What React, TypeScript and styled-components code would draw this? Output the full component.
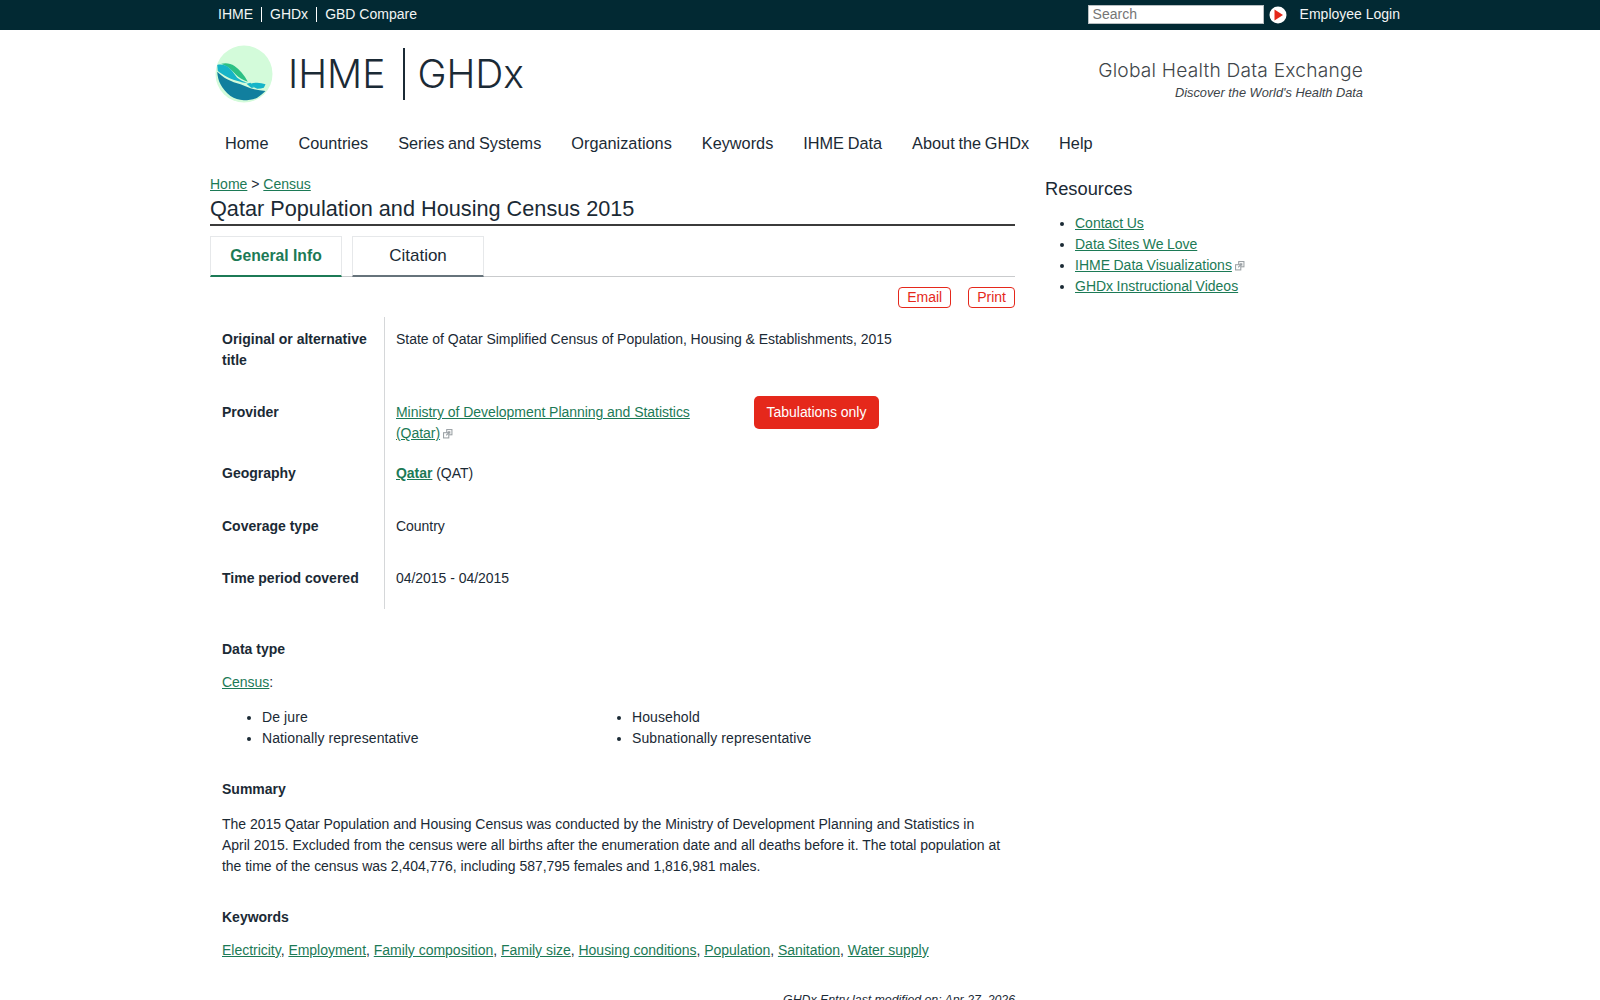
import React from 'react'
import styled, { createGlobalStyle } from 'styled-components'

const GlobalStyle = createGlobalStyle`
  html, body {
    margin: 0;
    padding: 0;
    background: #fff;
    color: #1b2a35;
    font-family: "Liberation Sans", Arial, sans-serif;
    font-size: 14px;
    line-height: 21px;
  }
  ul { margin: 0; padding: 0; }
`

const TopBar = styled.div`
  height: 30px;
  background-color: #022933;
  color: #fff;
`

const TopInner = styled.div`
  width: 1192px;
  height: 30px;
  margin: 0 0 0 208px;
  padding: 0 0 1px 10px;
  box-sizing: border-box;
  display: flex;
  align-items: center;
  justify-content: space-between;
`

const TopLinks = styled.div`
  display: flex;
  align-items: center;
`

const TopLink = styled.a<{ $first?: boolean }>`
  color: #f2f5f5;
  font-size: 14px;
  line-height: 15px;
  padding: 0 8px;
  padding-left: ${({ $first }) => ($first ? '0' : '8px')};
  border-left: ${({ $first }) => ($first ? 'none' : '1px solid #fff')};
`

const LoginLink = styled.a`
  color: #f2f5f5;
  font-size: 14px;
  line-height: 15px;
`

const SearchArea = styled.div`
  display: flex;
  align-items: center;
`

const SearchInput = styled.input`
  width: 176px;
  height: 19px;
  box-sizing: border-box;
  border: 1px solid #b9bfc2;
  padding: 0 4px 2px;
  font-family: inherit;
  font-size: 14px;
  color: #444;
  background: #fff;
  outline: none;

  ::placeholder {
    color: #757575;
  }
`

const SearchGo = styled.svg`
  width: 18px;
  height: 18px;
  margin: 0 13px 0 5px;
`

const HeaderRow = styled.div`
  width: 1155px;
  margin-left: 208px;
  padding-top: 14px;
  height: 79px;
  display: flex;
  justify-content: space-between;
  align-items: flex-start;
`

const LogoWrap = styled.a`
  display: flex;
  align-items: center;
  height: 60px;
  padding-left: 7px;
  color: #1b2a35;
  font-family: Inter, sans-serif;
  font-weight: 300;
`

const LogoMark = styled.svg`
  width: 60px;
  height: 60px;
  margin-right: 13px;
`

const LogoWord = styled.span`
  font-size: 39px;
  line-height: 60px;
`

const LogoDivider = styled.span`
  display: block;
  width: 2px;
  height: 52px;
  margin: 0 12px 0 18px;
  background: #1b2a35;
`

const Tagline = styled.div`
  margin-top: 13px;
  text-align: right;
`

const TagTitle = styled.div`
  font-family: Inter, sans-serif;
  font-weight: 300;
  font-size: 19.2px;
  letter-spacing: 0.2px;
  line-height: 26px;
  color: #3f464a;
`

const TagSub = styled.div`
  margin-top: 1px;
  font-size: 12.8px;
  line-height: 18px;
  font-style: italic;
  color: #3c4348;
`

const Nav = styled.nav`
  margin-left: 210px;
  height: 41px;
  display: flex;
  align-items: center;
  gap: 30px;
  padding-left: 15px;
`

const NavItem = styled.a`
  font-size: 16.3px;
  word-spacing: -0.8px;
  color: #1b2a35;
`

const Columns = styled.div`
  margin: 10px 0 0 210px;
  display: flex;
  align-items: flex-start;
  gap: 30px;
`

const Main = styled.main`
  width: 805px;
`

const Link = styled.a`
  color: #1c7a56;
  text-decoration: underline;
`

const Breadcrumb = styled.div`
  font-size: 14px;
  line-height: 21px;
`

const Title = styled.h1`
  margin: 0;
  padding-bottom: 1px;
  border-bottom: 2px solid #3b3b3b;
  font-size: 21.7px;
  line-height: 28px;
  font-weight: 400;
  color: #1b2a35;
`

const Tabs = styled.div`
  margin-top: 10px;
  display: flex;
  gap: 10px;
  height: 40px;
  border-bottom: 1px solid #c9cbcd;
`

const Tab = styled.a<{ $active?: boolean }>`
  width: 132px;
  height: 41px;
  padding-bottom: 1px;
  box-sizing: border-box;
  display: flex;
  align-items: center;
  justify-content: center;
  border: 1px solid #e6e8ea;
  border-bottom: 2px solid ${({ $active }) => ($active ? '#1c7a56' : '#66737b')};
  font-size: ${({ $active }) => ($active ? '15.7px' : '17px')};
  font-weight: ${({ $active }) => ($active ? 700 : 400)};
  color: ${({ $active }) => ($active ? '#1c7a56' : '#1b2a35')};
`

const Actions = styled.div`
  margin-top: 10px;
  display: flex;
  justify-content: flex-end;
  gap: 17px;
`

const ActionButton = styled.a`
  height: 21px;
  box-sizing: border-box;
  padding: 0 8px;
  border: 1px solid #e5281b;
  border-radius: 4px;
  color: #e5281b;
  font-size: 14px;
  line-height: 19px;
`

const InfoGrid = styled.div`
  margin-top: 9px;
  display: grid;
  grid-template-columns: 175px 1fr;
`

const InfoLabel = styled.div<{ $height: number }>`
  height: ${({ $height }) => $height}px;
  box-sizing: border-box;
  padding: 12px 12px 0;
  border-right: 1px solid #d5d7d9;
  font-weight: 700;
`

const InfoValue = styled.div`
  padding: 12px 11px 0;
  letter-spacing: -0.04px;
`

const ProviderValue = styled(InfoValue)`
  display: flex;
  align-items: flex-start;
`

const ProviderName = styled.div`
  width: 322px;
  margin-right: 36px;
`

const Badge = styled.span`
  margin-top: -6px;
  height: 33px;
  width: 125px;
  box-sizing: border-box;
  border-radius: 5px;
  background: #e5281b;
  color: #fff;
  display: flex;
  align-items: center;
  justify-content: center;
`

const ExternalIcon = styled.svg`
  width: 11.5px;
  height: 11.5px;
  margin-left: 2px;
  vertical-align: -1px;
`

const Section = styled.section<{ $gap: number }>`
  margin-top: ${({ $gap }) => $gap}px;
  padding: 0 12px;
`

const SectionLabel = styled.div`
  font-weight: 700;
`

const TypeColumns = styled.div`
  display: grid;
  grid-template-columns: 370px 1fr;
  margin-top: 14px;
  padding-left: 40px;
`

const BulletList = styled.ul`
  list-style: disc;
  letter-spacing: 0.1px;
`

const Summary = styled.p`
  margin: 14px 0 0;
  letter-spacing: -0.03px;
`

const Keywords = styled.div`
  margin-top: 12px;
  letter-spacing: -0.02px;
`

const Modified = styled.div`
  margin-top: 29px;
  text-align: right;
  font-size: 12.3px;
  font-style: italic;
`

const Sidebar = styled.aside`
  width: 340px;
`

const SideTitle = styled.h2`
  margin: 1.5px 0 0;
  font-size: 18.3px;
  line-height: 26px;
  font-weight: 400;
  color: #1b2a35;
`

const SideList = styled.ul`
  margin-top: 11.5px;
  padding-left: 30px;
  list-style: disc;
  word-spacing: -0.4px;
`

const External = () => (
  <ExternalIcon viewBox="0 0 11 11" fill="none" stroke="#9aa0a4" strokeWidth="1">
    <rect x="4.5" y="1.5" width="5" height="5" />
    <rect x="1.5" y="4.5" width="5" height="5" fill="#fff" />
    <path d="M4 7l3.500-3.500M5.500 3.500h2v2" />
  </ExternalIcon>
)

const Mark = () => (
  <LogoMark viewBox="1.5 1 60 60">
    <circle cx="30.5" cy="31" r="28.5" fill="#d3fbda" />
    <path d="M7.700 20.700C12 19.800 17 20 21 23C26 26.500 31 32 34.300 38.700C29 37 25 34.500 22 31.300C19.500 28.500 17 26 15.300 24.700C12.500 23 10 21.800 7.700 20.700Z" fill="#2cc084" />
    <path d="M3.700 22C7 21 13 21.500 17 26.300C20 29.500 21.500 32.500 23.700 34.700C26.500 37 30 38.700 33.700 39.700C31 40 29 39.500 27 38.700C22 37.500 17.500 36 13.700 34C10 32.200 7 30 4.300 28Z" fill="#16b4c8" />
    <path d="M37 40.700C39 39.900 41.500 39.500 43.700 39.700C46.500 39.800 49.500 40.400 52 41.300C51.500 42.500 51 43.800 50.300 44.700C48 45.400 46 45.800 43.700 45.700C41.800 45 40 44 38.700 43Z" fill="#16b4c8" />
    <path d="M33 40.700L37 39.700L40.300 44.700L37.700 44.700Z" fill="#16b4c8" />
    <path d="M3.700 28.700C6.500 31.500 10 34.300 13.700 36.300C18 38.700 22.500 40 27 41.300C30.500 42.500 33.500 44 37 45.300C42 46.800 47 47.500 52 48C49 50.800 46.500 53 43.700 54.700C39.500 56.500 35 57.300 30.300 57.300C25.500 56.800 21 55.500 17 53C12.500 49.500 9 45.500 7 41.300C5 37.500 4 33 3.700 28.700Z" fill="#117f9e" />
  </LogoMark>
)

export default function App() {
  return (
    <>
      <GlobalStyle />
      <TopBar>
        <TopInner>
          <TopLinks>
            <TopLink $first>IHME</TopLink>
            <TopLink>GHDx</TopLink>
            <TopLink>GBD Compare</TopLink>
          </TopLinks>
          <SearchArea>
            <SearchInput placeholder="Search" />
            <SearchGo viewBox="0 0 18 18">
              <circle cx="9" cy="9" r="8.5" fill="#fff" />
              <path d="M5.500 3.500L14 9l-8.500 5.500z" fill="#e5281b" />
            </SearchGo>
            <LoginLink>Employee Login</LoginLink>
          </SearchArea>
        </TopInner>
      </TopBar>

      <HeaderRow>
        <LogoWrap>
          <Mark />
          <LogoWord>IHME</LogoWord>
          <LogoDivider />
          <LogoWord>GHDx</LogoWord>
        </LogoWrap>
        <Tagline>
          <TagTitle>Global Health Data Exchange</TagTitle>
          <TagSub>Discover the World's Health Data</TagSub>
        </Tagline>
      </HeaderRow>

      <Nav>
        <NavItem>Home</NavItem>
        <NavItem>Countries</NavItem>
        <NavItem>Series and Systems</NavItem>
        <NavItem>Organizations</NavItem>
        <NavItem>Keywords</NavItem>
        <NavItem>IHME Data</NavItem>
        <NavItem>About the GHDx</NavItem>
        <NavItem>Help</NavItem>
      </Nav>

      <Columns>
        <Main>
          <Breadcrumb>
            <Link>Home</Link> &gt; <Link>Census</Link>
          </Breadcrumb>
          <Title>Qatar Population and Housing Census 2015</Title>
          <Tabs>
            <Tab $active>General Info</Tab>
            <Tab>Citation</Tab>
          </Tabs>
          <Actions>
            <ActionButton>Email</ActionButton>
            <ActionButton>Print</ActionButton>
          </Actions>

          <InfoGrid>
            <InfoLabel $height={73}>Original or alternative title</InfoLabel>
            <InfoValue>State of Qatar Simplified Census of Population, Housing &amp; Establishments, 2015</InfoValue>
            <InfoLabel $height={61}>Provider</InfoLabel>
            <ProviderValue>
              <ProviderName>
                <Link>Ministry of Development Planning and Statistics (Qatar)</Link>
                <External />
              </ProviderName>
              <Badge>Tabulations only</Badge>
            </ProviderValue>
            <InfoLabel $height={53}>Geography</InfoLabel>
            <InfoValue>
              <Link><strong>Qatar</strong></Link> (QAT)
            </InfoValue>
            <InfoLabel $height={52}>Coverage type</InfoLabel>
            <InfoValue>Country</InfoValue>
            <InfoLabel $height={53}>Time period covered</InfoLabel>
            <InfoValue>04/2015 - 04/2015</InfoValue>
          </InfoGrid>

          <Section $gap={30}>
            <SectionLabel>Data type</SectionLabel>
            <Keywords>
              <Link>Census</Link>:
            </Keywords>
            <TypeColumns>
              <BulletList>
                <li>De jure</li>
                <li>Nationally representative</li>
              </BulletList>
              <BulletList>
                <li>Household</li>
                <li>Subnationally representative</li>
              </BulletList>
            </TypeColumns>
          </Section>

          <Section $gap={30}>
            <SectionLabel>Summary</SectionLabel>
            <Summary>
              The 2015 Qatar Population and Housing Census was conducted by the Ministry of Development Planning and
              Statistics in
              <br />
              April 2015. Excluded from the census were all births after the enumeration date and all deaths before it.
              The total population at
              <br />
              the time of the census was 2,404,776, including 587,795 females and 1,816,981 males.
            </Summary>
          </Section>

          <Section $gap={30}>
            <SectionLabel>Keywords</SectionLabel>
            <Keywords>
              <Link>Electricity</Link>, <Link>Employment</Link>, <Link>Family composition</Link>,{' '}
              <Link>Family size</Link>, <Link>Housing conditions</Link>, <Link>Population</Link>,{' '}
              <Link>Sanitation</Link>, <Link>Water supply</Link>
            </Keywords>
          </Section>

          <Modified>GHDx Entry last modified on: Apr 27, 2026</Modified>
        </Main>

        <Sidebar>
          <SideTitle>Resources</SideTitle>
          <SideList>
            <li><Link>Contact Us</Link></li>
            <li><Link>Data Sites We Love</Link></li>
            <li><Link>IHME Data Visualizations</Link><External /></li>
            <li><Link>GHDx Instructional Videos</Link></li>
          </SideList>
        </Sidebar>
      </Columns>
    </>
  )
}
